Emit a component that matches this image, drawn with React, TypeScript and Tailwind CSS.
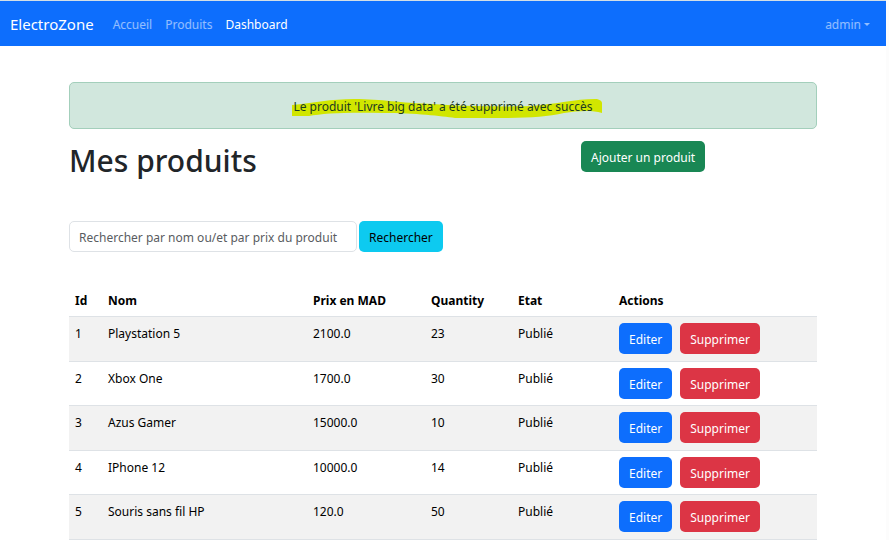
const products = [
  { id: 1, name: "Playstation 5", price: "2100.0", quantity: 23 },
  { id: 2, name: "Xbox One", price: "1700.0", quantity: 30 },
  { id: 3, name: "Azus Gamer", price: "15000.0", quantity: 10 },
  { id: 4, name: "IPhone 12", price: "10000.0", quantity: 14 },
  { id: 5, name: "Souris sans fil HP", price: "120.0", quantity: 50 },
];

const button = "h-[31px] rounded-[5px] px-[10px] pt-[2px] whitespace-nowrap";

function Navbar() {
  return (
    <nav className="flex h-[46px] items-center border-t border-[#d3dfe6] bg-[#0d6efd] pt-[2px] pr-4 pl-[10px] text-white/55">
      <a href="#" className="mr-[19px] text-[15px] text-white">ElectroZone</a>
      <div className="flex grow gap-[13px]">
        <a href="#">Accueil</a>
        <a href="#">Produits</a>
        <a href="#" className="text-white">Dashboard</a>
      </div>
      <button type="button" className="flex items-center gap-[3px]">
        admin
        <span className="border-x-[3px] border-t-[3px] border-x-transparent border-t-current" />
      </button>
    </nav>
  );
}

function Alert() {
  return (
    <div role="alert" className="flex h-[47px] items-center justify-center rounded-[5px] border border-[#a3cfbb] bg-[#d1e7dd] pt-[2px] text-[#1b3a22]">
      <span className="relative">
        <svg className="absolute top-[2px] -left-[2px] h-5 w-[312px]" viewBox="0 0 312 20" aria-hidden="true">
          <path d="M1 7 C22 5 40 1 63 1 C92 1 108 5 142 6 C165 8 210 9 240 8 C266 6 284 1 304 1 C308 1 311 3 311 5 V15 C300 12 287 13 273 15 C255 19 236 20 205 20 H164 C150 18 125 15 92 15 C60 14 32 15 18 18 L1 18 Z" fill="#d1e600" />
        </svg>
        <span className="relative">Le produit 'Livre big data' a été supprimé avec succès</span>
      </span>
    </div>
  );
}

export default function App() {
  return (
    <div className="min-h-screen bg-[#fcfcfc] pr-[3px] font-['Noto_Sans',sans-serif] text-[12px] leading-[21px] text-[#212529]">
      <div className="min-h-screen bg-white">
        <Navbar />
        <main className="mx-auto mt-9 max-w-[748px]">
          <Alert />
          <div className="mt-3 grid grid-cols-3 items-start gap-5">
            <h1 className="col-span-2 text-[30px] leading-10 font-medium">Mes produits</h1>
            <div>
              <button type="button" className={`${button} bg-[#198754] text-white`}>Ajouter un produit</button>
            </div>
          </div>
          <form className="mt-10 flex gap-[2px]" onSubmit={(e) => e.preventDefault()}>
            <input
              type="text"
              aria-label="Rechercher un produit"
              placeholder="Rechercher par nom ou/et par prix du produit"
              className="h-[31px] w-72 rounded-[5px] border border-[#dee2e6] px-[9px] pt-[2px] placeholder:text-[#595c5f]"
            />
            <button type="submit" className={`${button} bg-[#0dcaf0] text-black`}>Rechercher</button>
          </form>
          <table className="mt-8 w-full table-fixed border-collapse text-left text-black">
            <colgroup>
              <col className="w-[33px]" />
              <col className="w-[205px]" />
              <col className="w-[118px]" />
              <col className="w-[87px]" />
              <col className="w-[101px]" />
              <col />
            </colgroup>
            <thead>
              <tr className="h-8 border-b border-[#dee2e6] *:px-[6px] *:pt-[2px]">
                <th>Id</th>
                <th>Nom</th>
                <th>Prix en MAD</th>
                <th>Quantity</th>
                <th>Etat</th>
                <th>Actions</th>
              </tr>
            </thead>
            <tbody>
              {products.map((p) => (
                <tr key={p.id} className="border-b border-[#dee2e6] align-top *:px-[6px] *:pt-[6px] odd:h-[45px] odd:bg-[#f2f2f2] even:h-11">
                  <td>{p.id}</td>
                  <td>{p.name}</td>
                  <td>{p.price}</td>
                  <td>{p.quantity}</td>
                  <td>Publié</td>
                  <td>
                    <div className="flex gap-2 text-white">
                      <button type="button" className={`${button} bg-[#0d6efd]`}>Editer</button>
                      <button type="button" className={`${button} bg-[#dc3545]`}>Supprimer</button>
                    </div>
                  </td>
                </tr>
              ))}
            </tbody>
          </table>
        </main>
      </div>
    </div>
  );
}
